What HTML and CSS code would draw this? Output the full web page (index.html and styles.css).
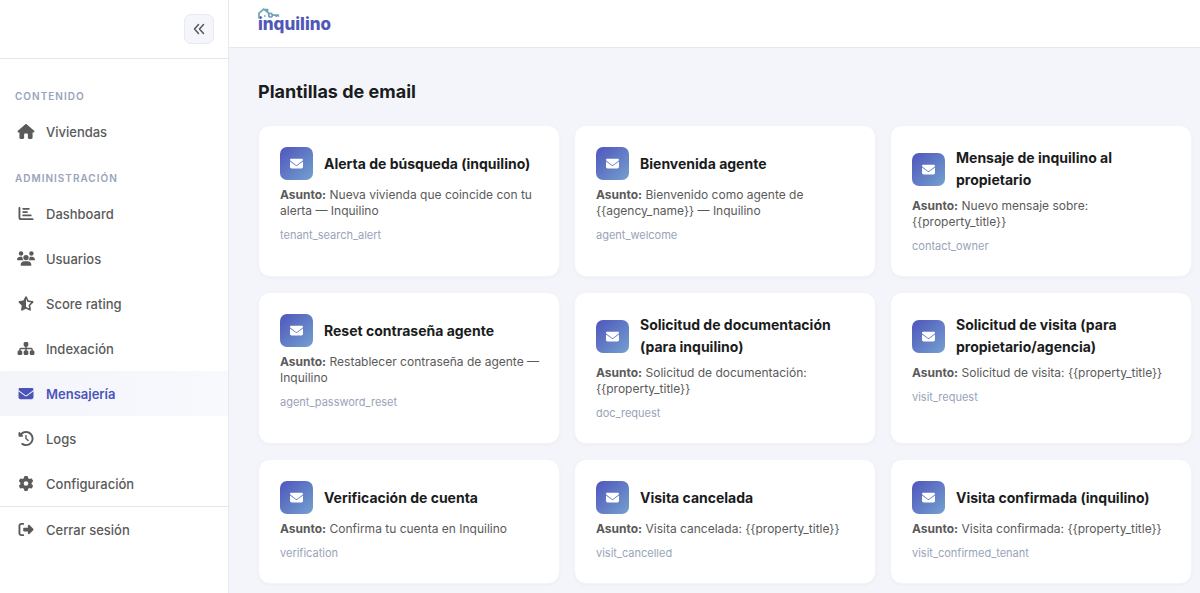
FILE: index.html
```
<!DOCTYPE html>
<html lang="es">
<head>
    <meta charset="UTF-8">
    <meta name="viewport" content="width=device-width, initial-scale=1.0">
    <title>Plantillas de email - Inquilino</title>
    <link rel="stylesheet" href="styles.css">
</head>
<body>
<!-- Iconos -->
<svg class="sprite" aria-hidden="true">
    <symbol id="i-envelope" viewBox="0 0 512 512"><path d="M48 64C21.500 64 0 85.500 0 112c0 15.100 7.100 29.300 19.200 38.400L236.800 313.600c11.400 8.500 27 8.500 38.400 0L492.800 150.400c12.100-9.100 19.200-23.300 19.200-38.400c0-26.500-21.500-48-48-48H48zM0 176V384c0 35.300 28.700 64 64 64H448c35.300 0 64-28.700 64-64V176L294.400 339.200c-22.800 17.100-54 17.100-76.800 0L0 176z"/></symbol>
    <symbol id="i-home" viewBox="0 0 576 512"><path d="M575.800 255.500c0 18-15 32.100-32 32.100h-32l.7 160.200c0 2.700-.2 5.400-.5 8.100V472c0 22.100-17.900 40-40 40H392c-22.100 0-40-17.900-40-40V360c0-17.700-14.300-32-32-32H256c-17.700 0-32 14.300-32 32v112c0 22.100-17.900 40-40 40H104c-22.100 0-40-17.900-40-40V287.600H32c-18 0-32-14-32-32.100c0-9 3-17 10-24L266.400 8c7-7 15-8 22-8s15 2 21 7L564.800 231.500c8 7 12 15 11 24z"/></symbol>
    <symbol id="i-chart" viewBox="0 0 512 512"><path d="M32 32c17.700 0 32 14.300 32 32V400c0 8.800 7.200 16 16 16H480c17.700 0 32 14.300 32 32s-14.300 32-32 32H80c-44.200 0-80-35.800-80-80V64C0 46.300 14.300 32 32 32zm96 64c0-17.700 14.300-32 32-32l192 0c17.700 0 32 14.300 32 32s-14.300 32-32 32l-192 0c-17.700 0-32-14.300-32-32zm32 80H288c17.700 0 32 14.300 32 32s-14.300 32-32 32H160c-17.700 0-32-14.300-32-32s14.300-32 32-32zm0 112H416c17.700 0 32 14.300 32 32s-14.300 32-32 32H160c-17.700 0-32-14.300-32-32s14.300-32 32-32z"/></symbol>
    <symbol id="i-users" viewBox="0 0 640 512"><path d="M144 0a80 80 0 1 1 0 160A80 80 0 1 1 144 0zM512 0a80 80 0 1 1 0 160A80 80 0 1 1 512 0zM0 298.700C0 239.800 47.800 192 106.700 192h42.700c15.900 0 31 3.500 44.600 9.700c-1.300 7.200-1.900 14.700-1.900 22.300c0 38.200 16.800 72.500 43.300 96H21.300C9.600 320 0 310.400 0 298.700zM405.300 320h-.7c26.600-23.500 43.300-57.800 43.300-96c0-7.600-.7-15-1.900-22.300c13.600-6.300 28.700-9.700 44.600-9.700h42.700C592.200 192 640 239.800 640 298.700c0 11.800-9.600 21.300-21.300 21.300H405.300zM224 224a96 96 0 1 1 192 0a96 96 0 1 1-192 0zM128 485.300C128 411.700 187.700 352 261.300 352H378.700C452.300 352 512 411.700 512 485.300c0 14.700-11.900 26.700-26.700 26.700H154.700c-14.700 0-26.700-11.900-26.700-26.700z"/></symbol>
    <symbol id="i-star" viewBox="0 0 640 512"><path d="M320 376.400l.1-.1 26.400 14.100 85.200 45.500-16.500-97.600-4.800-28.700 20.700-20.500 70.100-69.300-96.100-14.200-29.300-4.300-12.900-26.600L320.100 86.900l-.1 .3V376.400zm175.100 98.300c2 12-3 24.200-12.900 31.300s-23 8-33.800 2.300L320.100 439.800 191.800 508.300C181 514 167.900 513.100 158 506s-14.900-19.300-12.900-31.300L169.800 329 65.600 225.900c-8.600-8.500-11.700-21.200-7.900-32.700s13.700-19.900 25.700-21.700L227 150.300 291.400 18c5.400-11 16.500-18 28.800-18s23.400 7 28.800 18l64.300 132.300 143.600 21.200c12 1.800 22 10.200 25.700 21.700s.7 24.200-7.900 32.700L470.500 329l24.600 145.700z"/></symbol>
    <symbol id="i-sitemap" viewBox="0 0 576 512"><path d="M208 80c0-26.500 21.500-48 48-48h64c26.500 0 48 21.500 48 48v64c0 26.500-21.500 48-48 48h-8v40H464c30.900 0 56 25.100 56 56v32h8c26.500 0 48 21.500 48 48v64c0 26.500-21.500 48-48 48H464c-26.500 0-48-21.500-48-48V368c0-26.500 21.500-48 48-48h8V288c0-4.400-3.600-8-8-8H312v40h8c26.500 0 48 21.500 48 48v64c0 26.500-21.500 48-48 48H256c-26.500 0-48-21.500-48-48V368c0-26.500 21.500-48 48-48h8V280H112c-4.400 0-8 3.600-8 8v32h8c26.500 0 48 21.500 48 48v64c0 26.500-21.500 48-48 48H48c-26.500 0-48-21.500-48-48V368c0-26.500 21.500-48 48-48h8V288c0-30.900 25.100-56 56-56H264V192h-8c-26.500 0-48-21.500-48-48V80z"/></symbol>
    <symbol id="i-history" viewBox="0 0 512 512"><path d="M75 75L41 41C25.900 25.900 0 36.600 0 57.900V168c0 13.300 10.700 24 24 24H134.100c21.400 0 32.100-25.900 17-41l-30.800-30.800C155 85.500 203 64 256 64c106 0 192 86 192 192s-86 192-192 192c-40.800 0-78.600-12.700-109.700-34.400c-14.500-10.100-34.400-6.600-44.600 7.900s-6.600 34.400 7.900 44.600C151.200 495 201.700 512 256 512c141.400 0 256-114.600 256-256S397.400 0 256 0C185.300 0 121.300 28.700 75 75zm181 53c-13.300 0-24 10.700-24 24V256c0 6.400 2.500 12.500 7 17l72 72c9.400 9.400 24.600 9.400 33.900 0s9.400-24.600 0-33.900l-65-65V152c0-13.300-10.700-24-24-24z"/></symbol>
    <symbol id="i-gear" viewBox="0 0 512 512"><path d="M495.900 166.600c3.200 8.700 .5 18.400-6.400 24.600l-43.300 39.400c1.100 8.300 1.700 16.800 1.700 25.400s-.6 17.100-1.700 25.400l43.300 39.400c6.900 6.200 9.600 15.900 6.400 24.600c-4.400 11.900-9.700 23.300-15.800 34.300l-4.700 8.100c-6.600 11-14 21.400-22.100 31.200c-5.900 7.200-15.700 9.600-24.500 6.800l-55.700-17.700c-13.400 10.300-28.200 18.900-44 25.400l-12.500 57.100c-2 9.100-9 16.300-18.200 17.800c-13.800 2.300-28 3.500-42.500 3.500s-28.700-1.200-42.500-3.500c-9.200-1.500-16.200-8.700-18.200-17.800l-12.500-57.100c-15.800-6.500-30.600-15.100-44-25.400L83.100 425.900c-8.800 2.800-18.600 .3-24.500-6.800c-8.100-9.800-15.500-20.200-22.100-31.200l-4.700-8.100c-6.100-11-11.400-22.400-15.800-34.300c-3.200-8.700-.5-18.400 6.400-24.600l43.300-39.400C64.600 273.100 64 264.600 64 256s.6-17.100 1.700-25.400L22.400 191.200c-6.900-6.200-9.600-15.900-6.400-24.600c4.400-11.900 9.700-23.300 15.800-34.300l4.700-8.100c6.600-11 14-21.400 22.100-31.200c5.900-7.200 15.700-9.600 24.500-6.800l55.700 17.700c13.400-10.300 28.200-18.900 44-25.400l12.500-57.100c2-9.100 9-16.300 18.200-17.800C227.300 1.200 241.500 0 256 0s28.700 1.200 42.500 3.500c9.200 1.500 16.200 8.700 18.200 17.800l12.500 57.100c15.800 6.500 30.600 15.100 44 25.400l55.700-17.700c8.800-2.800 18.600-.3 24.500 6.800c8.100 9.800 15.500 20.200 22.100 31.200l4.700 8.100c6.100 11 11.400 22.400 15.800 34.300zM256 336a80 80 0 1 0 0-160 80 80 0 1 0 0 160z"/></symbol>
    <symbol id="i-logout" viewBox="0 0 512 512"><path d="M502.600 278.600c12.500-12.500 12.500-32.800 0-45.300L374.600 105.300c-9.200-9.200-22.900-11.900-34.900-6.900S320 115 320 128v64H192c-17.700 0-32 14.300-32 32v64c0 17.700 14.300 32 32 32H320v64c0 12.900 7.800 24.600 19.800 29.600s25.700 2.200 34.900-6.900l128-128zM160 96c17.700 0 32-14.300 32-32s-14.300-32-32-32H96C43 32 0 75 0 128V384c0 53 43 96 96 96h64c17.700 0 32-14.300 32-32s-14.300-32-32-32H96c-17.700 0-32-14.300-32-32V128c0-17.700 14.300-32 32-32h64z"/></symbol>
</svg>

<div class="layout">
    <aside class="sidebar">
        <div class="sidebar-header">
            <button class="toggle-btn" type="button" aria-label="Contraer menú">
                <svg viewBox="0 0 12 12"><path d="M5.500 1.500 1.500 6l4 4.500M10.500 1.500 6.500 6l4 4.500"/></svg>
            </button>
        </div>

        <nav class="menu">
            <h2 class="menu-label">Contenido</h2>
            <a class="menu-item" href="#"><svg class="icon"><use href="#i-home"/></svg>Viviendas</a>

            <h2 class="menu-label">Administración</h2>
            <a class="menu-item" href="#"><svg class="icon"><use href="#i-chart"/></svg>Dashboard</a>
            <a class="menu-item" href="#"><svg class="icon"><use href="#i-users"/></svg>Usuarios</a>
            <a class="menu-item" href="#"><svg class="icon"><use href="#i-star"/></svg>Score rating</a>
            <a class="menu-item" href="#"><svg class="icon"><use href="#i-sitemap"/></svg>Indexación</a>
            <a class="menu-item active" href="#"><svg class="icon"><use href="#i-envelope"/></svg>Mensajería</a>
            <a class="menu-item" href="#"><svg class="icon"><use href="#i-history"/></svg>Logs</a>
            <a class="menu-item" href="#"><svg class="icon"><use href="#i-gear"/></svg>Configuración</a>
        </nav>

        <div class="sidebar-footer">
            <a class="menu-item" href="#"><svg class="icon"><use href="#i-logout"/></svg>Cerrar sesión</a>
        </div>
    </aside>

    <div class="content">
        <header class="topbar">
            <a class="logo" href="#">
                <svg class="logo-mark" viewBox="0 0 22 12" aria-hidden="true">
                    <path d="M1 10.500V5.200L5.800 1.200l2 1.600V1.600h1.700v2.600L11 5.500"/>
                    <path d="M6 7.200h1.600v1.600H6z" class="logo-window"/>
                    <circle cx="12.500" cy="7.200" r="1.800"/>
                    <path d="M14.300 7.200H21M18.200 7.200v1.800M20.300 7.200v1.500"/>
                </svg>
                inquilino
            </a>
        </header>

        <main class="main">
            <h1>Plantillas de email</h1>

            <div class="grid">
                <article class="card">
                    <div class="card-header">
                        <span class="card-icon"><svg><use href="#i-envelope"/></svg></span>
                        <h3>Alerta de búsqueda (inquilino)</h3>
                    </div>
                    <p class="subject"><strong>Asunto:</strong> Nueva vivienda que coincide con tu alerta — Inquilino</p>
                    <p class="key">tenant_search_alert</p>
                </article>

                <article class="card">
                    <div class="card-header">
                        <span class="card-icon"><svg><use href="#i-envelope"/></svg></span>
                        <h3>Bienvenida agente</h3>
                    </div>
                    <p class="subject"><strong>Asunto:</strong> Bienvenido como agente de {{agency_name}} — Inquilino</p>
                    <p class="key">agent_welcome</p>
                </article>

                <article class="card">
                    <div class="card-header">
                        <span class="card-icon"><svg><use href="#i-envelope"/></svg></span>
                        <h3>Mensaje de inquilino al propietario</h3>
                    </div>
                    <p class="subject"><strong>Asunto:</strong> Nuevo mensaje sobre: {{property_title}}</p>
                    <p class="key">contact_owner</p>
                </article>

                <article class="card">
                    <div class="card-header">
                        <span class="card-icon"><svg><use href="#i-envelope"/></svg></span>
                        <h3>Reset contraseña agente</h3>
                    </div>
                    <p class="subject"><strong>Asunto:</strong> Restablecer contraseña de agente — Inquilino</p>
                    <p class="key">agent_password_reset</p>
                </article>

                <article class="card">
                    <div class="card-header">
                        <span class="card-icon"><svg><use href="#i-envelope"/></svg></span>
                        <h3>Solicitud de documentación (para inquilino)</h3>
                    </div>
                    <p class="subject"><strong>Asunto:</strong> Solicitud de documentación: {{property_title}}</p>
                    <p class="key">doc_request</p>
                </article>

                <article class="card">
                    <div class="card-header">
                        <span class="card-icon"><svg><use href="#i-envelope"/></svg></span>
                        <h3>Solicitud de visita (para propietario/agencia)</h3>
                    </div>
                    <p class="subject"><strong>Asunto:</strong> Solicitud de visita: {{property_title}}</p>
                    <p class="key">visit_request</p>
                </article>

                <article class="card">
                    <div class="card-header">
                        <span class="card-icon"><svg><use href="#i-envelope"/></svg></span>
                        <h3>Verificación de cuenta</h3>
                    </div>
                    <p class="subject"><strong>Asunto:</strong> Confirma tu cuenta en Inquilino</p>
                    <p class="key">verification</p>
                </article>

                <article class="card">
                    <div class="card-header">
                        <span class="card-icon"><svg><use href="#i-envelope"/></svg></span>
                        <h3>Visita cancelada</h3>
                    </div>
                    <p class="subject"><strong>Asunto:</strong> Visita cancelada: {{property_title}}</p>
                    <p class="key">visit_cancelled</p>
                </article>

                <article class="card">
                    <div class="card-header">
                        <span class="card-icon"><svg><use href="#i-envelope"/></svg></span>
                        <h3>Visita confirmada (inquilino)</h3>
                    </div>
                    <p class="subject"><strong>Asunto:</strong> Visita confirmada: {{property_title}}</p>
                    <p class="key">visit_confirmed_tenant</p>
                </article>
            </div>
        </main>
    </div>
</div>
</body>
</html>
```
FILE: styles.css
```
* {
    margin: 0;
    padding: 0;
    box-sizing: border-box;
}

body {
    font-family: Inter, "Liberation Sans", sans-serif;
    background: #f4f5fa;
    color: #1a1c20;
}

a {
    color: inherit;
    text-decoration: none;
}

.sprite {
    display: none;
}

.layout {
    display: flex;
    min-height: 100vh;
}

/* Sidebar */
.sidebar {
    flex: 0 0 229px;
    background: #fff;
    border-right: 1px solid #e6e8ee;
}

.sidebar-header {
    display: flex;
    justify-content: flex-end;
    padding: 14px;
    border-bottom: 1px solid #e2e5ec;
}

.toggle-btn {
    display: flex;
    align-items: center;
    justify-content: center;
    width: 30px;
    height: 30px;
    background: #f5f6fb;
    border: 1px solid #e8eaf3;
    border-radius: 7px;
    cursor: pointer;
}

.toggle-btn svg {
    width: 12px;
    height: 12px;
    fill: none;
    stroke: #555;
    stroke-width: 1.5;
    stroke-linecap: round;
    stroke-linejoin: round;
}

.menu {
    padding-top: 22px;
}

.menu-label {
    padding: 8px 15px 6px;
    font-size: 10px;
    line-height: 14px;
    font-weight: 600;
    letter-spacing: 1px;
    text-transform: uppercase;
    color: #98a4b9;
}

.menu-item {
    display: flex;
    align-items: center;
    gap: 11px;
    height: 45px;
    padding: 0 17px;
    font-size: 13px;
    font-weight: 500;
    color: #5a5a5a;
}

.menu-item + .menu-label {
    padding-top: 17px;
}

.menu-item:hover {
    background: #f8f9fc;
}

.menu-item.active {
    background: linear-gradient(90deg, #f4f5fb, #f7f9fd);
    color: #4b55b8;
    font-weight: 600;
}

.icon {
    width: 18px;
    height: 15px;
    fill: currentColor;
}

.sidebar-footer {
    border-top: 1px solid #e2e5ec;
}

/* Contenido */
.content {
    flex: 1;
    min-width: 0;
}

.topbar {
    display: flex;
    align-items: center;
    height: 48px;
    padding: 0 29px;
    background: #fff;
    border-bottom: 1px solid #e6e8ee;
}

.logo {
    position: relative;
    font-size: 17px;
    line-height: 24px;
    font-weight: 800;
    color: #4f57b9;
}

.logo-mark {
    position: absolute;
    top: -4px;
    left: 0;
    width: 22px;
    height: 12px;
    fill: none;
    stroke: #6fa3b8;
    stroke-width: 1.7;
}

.logo-window {
    fill: #6fa3b8;
    stroke: none;
}

.main {
    padding: 29px 8px 9px 29px;
}

h1 {
    margin-bottom: 18px;
    font-size: 18px;
    line-height: 30px;
    font-weight: 700;
}

.grid {
    display: grid;
    grid-template-columns: repeat(3, 1fr);
    gap: 15px 14px;
}

.card {
    padding: 21px 18px 21px 21px;
    background: #fff;
    border: 1px solid #f3f4f9;
    border-radius: 12px;
    box-shadow: 0 1px 3px rgba(30, 40, 90, 0.04);
}

.card-header {
    display: flex;
    align-items: center;
    gap: 11px;
    margin-bottom: 7px;
}

.card-icon {
    display: flex;
    align-items: center;
    justify-content: center;
    flex: 0 0 33px;
    height: 33px;
    border-radius: 7px;
    background: linear-gradient(135deg, #4f55bc, #74a1cf);
}

.card-icon svg {
    width: 13px;
    height: 13px;
    fill: #fff;
}

.card h3 {
    font-size: 14px;
    line-height: 22px;
    font-weight: 700;
}

.subject {
    margin-bottom: 7px;
    font-size: 12px;
    line-height: 16px;
    color: #5a5a5a;
}

.key {
    font-size: 11px;
    line-height: 18px;
    color: #98a4b9;
}
```
